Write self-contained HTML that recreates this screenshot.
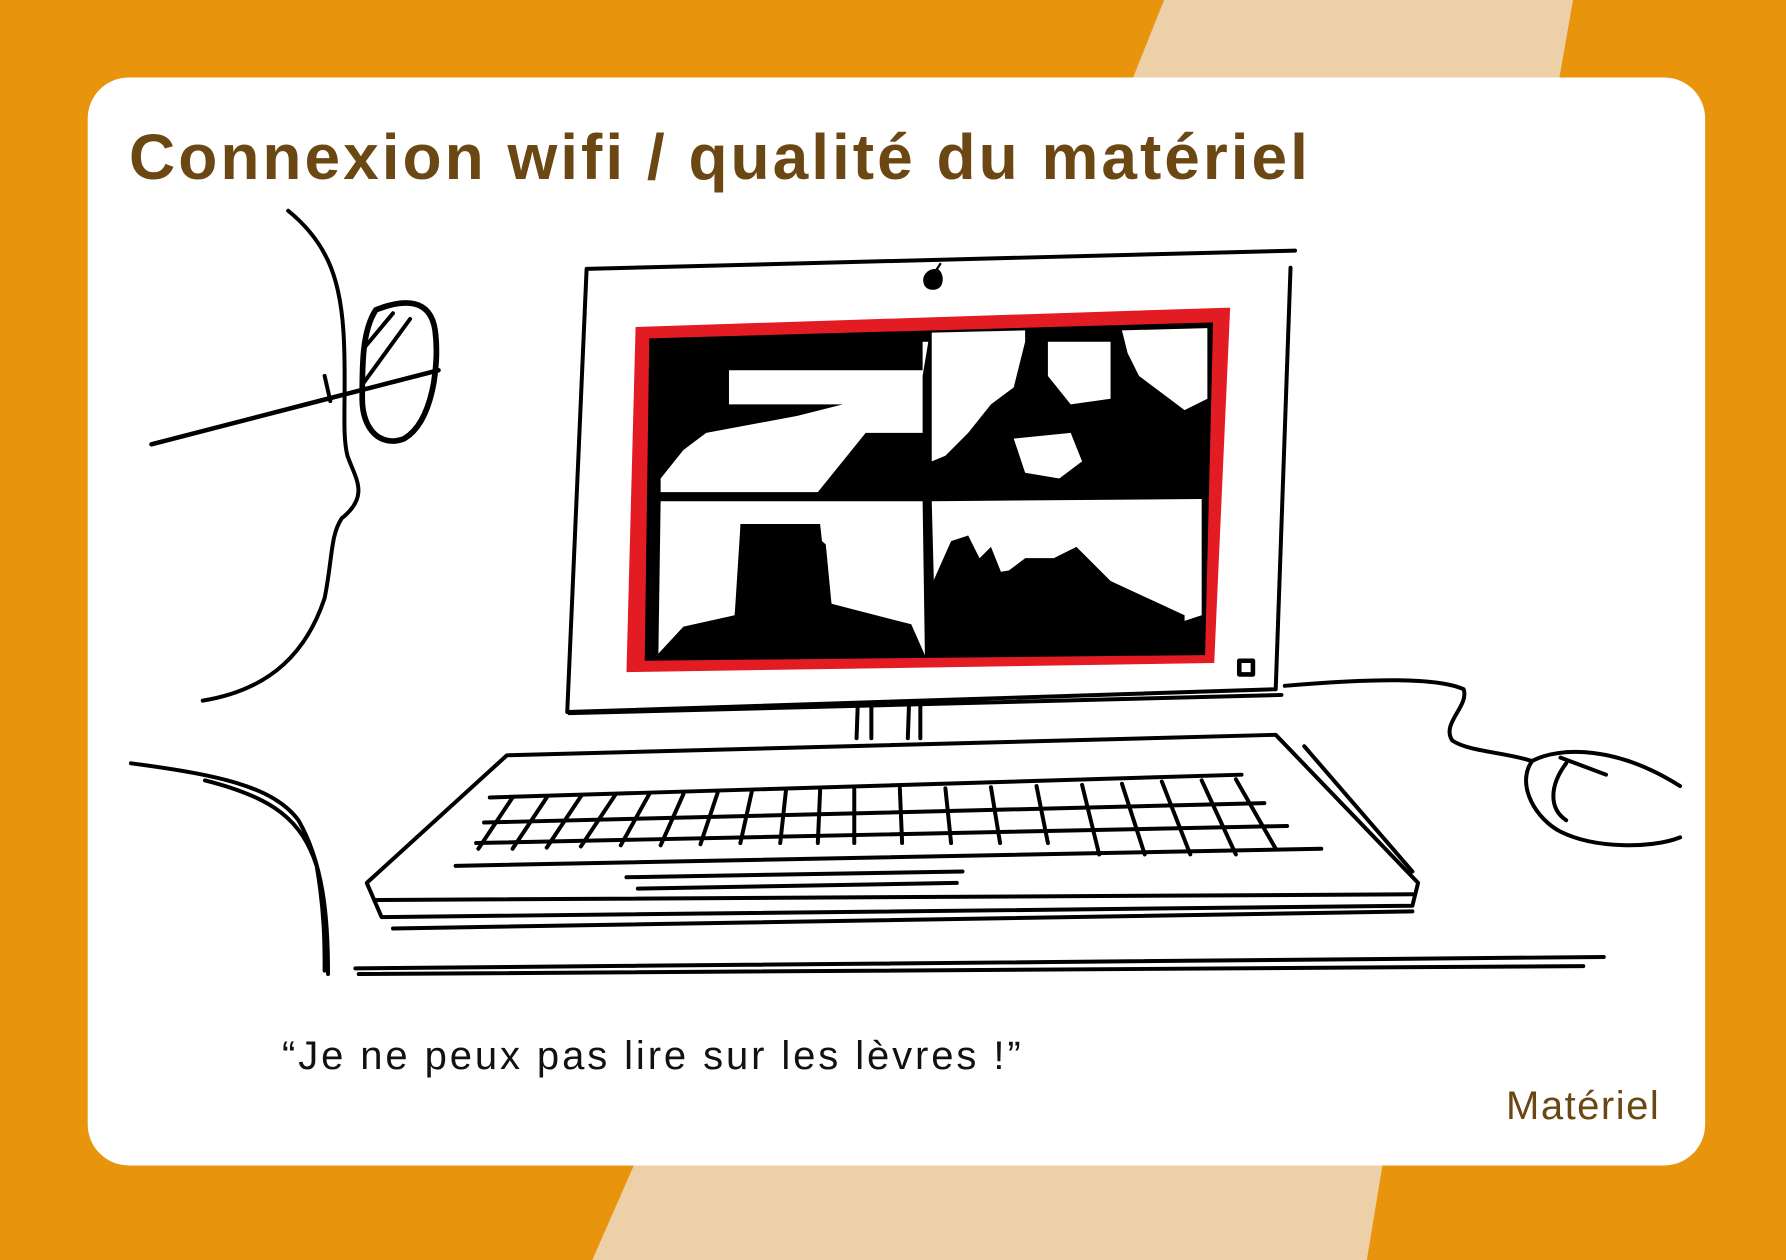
<!DOCTYPE html>
<html><head><meta charset="utf-8"><style>
html,body{margin:0;padding:0}
body{width:1786px;height:1260px;position:relative;overflow:hidden;background:#e8940c;font-family:"Liberation Sans",sans-serif}
svg{position:absolute;left:0;top:0}
.t{position:absolute;color:#6b4714;white-space:nowrap}
</style></head><body>
<svg width="1786" height="1260" viewBox="0 0 1568 1106" preserveAspectRatio="none">
<rect width="1568" height="1106" fill="#e8940c"/>
<polygon points="1022,0 1381,0 1367,80 990,80" fill="#edd0a8"/>
<polygon points="560,1015 1215,1015 1200,1106 520,1106" fill="#edd0a8"/>
<rect x="77" y="68" width="1420" height="955" rx="36" fill="#fff"/>
<g fill="none" stroke="#000" stroke-width="3.5" stroke-linecap="round" stroke-linejoin="round">
<path d="M253,185 C290,215 300,250 302,300 C304,350 300,380 305,400 C312,420 325,435 300,455 C290,470 292,490 285,525 C270,570 240,605 178,615"/>
<path d="M330,272 C355,262 378,262 382,290 C386,320 380,370 355,385 C335,393 318,378 318,350 C318,320 318,290 330,272Z" stroke-width="5"/>
<path d="M320,305 L345,275 M320,335 L360,280"/>
<path d="M133,390 L280,352 L385,325" stroke-width="4"/>
<path d="M285,330 L290,352"/>
<path d="M115,670 C190,680 240,690 262,720 C285,760 288,810 288,855"/>
<path d="M180,685 C240,700 265,720 278,760 C285,800 285,830 285,852"/>
<path d="M515,236 L1137,220 M515,236 L498,625 L1120,605 L1133,235 M500,626 L1125,610"/>
<path d="M753,620 L752,648 M765,620 L765,648 M798,620 L797,648 M808,620 L808,648"/>
<path d="M1088,580 L1100,580 L1100,592 L1088,592Z" stroke-width="4"/>
<path d="M1128,602 C1200,596 1260,594 1285,605 C1290,620 1265,635 1275,650 C1290,660 1320,660 1345,668"/>
<path d="M1345,668 C1370,655 1420,655 1475,690 M1345,668 C1330,690 1350,720 1370,730 C1400,745 1450,745 1475,735"/>
<path d="M1370,665 L1410,680 M1375,670 C1360,690 1360,710 1375,720"/>
<path d="M445,663 L1120,645 L1245,775 L1240,795 L335,805 L322,775 Z"/>
<path d="M330,790 L1240,785 M345,815 L1240,800 M1145,655 L1240,765"/>
<path d="M430,700 L1090,680 M425,722 L1110,705 M418,740 L1130,725 M400,760 L1160,745 M550,770 L845,765 M560,780 L840,775"/>
<path d="M450,700 L420,745 M480,700 L450,745 M510,699 L480,744 M540,698 L510,743 M570,697 L545,742 M600,697 L580,742 M630,696 L615,741 M660,695 L650,740 M690,694 L685,740 M720,694 L718,740 M750,693 L750,740 M790,692 L792,740 M830,692 L835,740 M870,691 L878,740 M910,690 L920,740 M950,689 L965,750 M985,688 L1005,750 M1020,686 L1045,750 M1055,685 L1085,750 M1085,684 L1120,745"/>
<path d="M312,850 C600,845 1000,842 1408,840 M315,855 L1390,848"/>
</g>
<polygon points="558,287 1080,270 1066,582 550,590" fill="#e31c24"/>
<polygon points="570,297 1065,283 1058,575 566,580" fill="#000"/>
<g fill="#fff">
<polygon points="588,300 810,300 810,325 640,325 640,355 740,355 700,365 620,380 600,395 580,420 580,432 718,432 760,380 810,380 810,330 815,300"/>
<polygon points="580,440 810,440 812,575 780,565 730,530 725,505 720,460 650,460 650,490 645,540 595,560 578,575"/>
<polygon points="818,292 900,290 900,300 890,340 870,355 850,380 830,400 818,405"/>
<polygon points="985,290 1060,288 1060,350 1040,360 1000,330 990,310"/>
<polygon points="920,300 975,300 975,350 940,355 920,330"/>
<polygon points="890,385 940,380 950,405 930,420 900,415"/>
<polygon points="818,440 1055,438 1055,540 1040,545 990,520 960,510 940,500 930,490 900,490 890,500 860,505 820,515"/>
<polygon points="820,520 860,510 880,525 830,530"/>
</g>
<g fill="#000">
<polygon points="650,462 705,460 725,478 730,530 800,548 812,575 575,577 600,550 645,540"/>
<polygon points="835,475 850,470 860,490 870,480 880,505 900,490 925,490 945,480 960,495 975,510 1040,540 1040,560 815,560 815,520"/>
</g>
<path d="M822,237 c-8,0 -12,6 -10,12 c2,6 12,6 14,0 c2,-6 -1,-12 -4,-12Z M822,237 l4,-6" fill="#000" stroke="#000" stroke-width="2"/>
</svg>
<div class="t" style="left:129px;top:120px;font-size:64px;font-weight:bold;letter-spacing:3px">Connexion wifi / qualité du matériel</div>
<div class="t" style="left:282px;top:1034px;font-size:40px;color:#111;letter-spacing:2.9px">“Je ne peux pas lire sur les lèvres !”</div>
<div class="t" style="left:1506px;top:1084px;font-size:40px;letter-spacing:1.5px">Matériel</div>
</body></html>
